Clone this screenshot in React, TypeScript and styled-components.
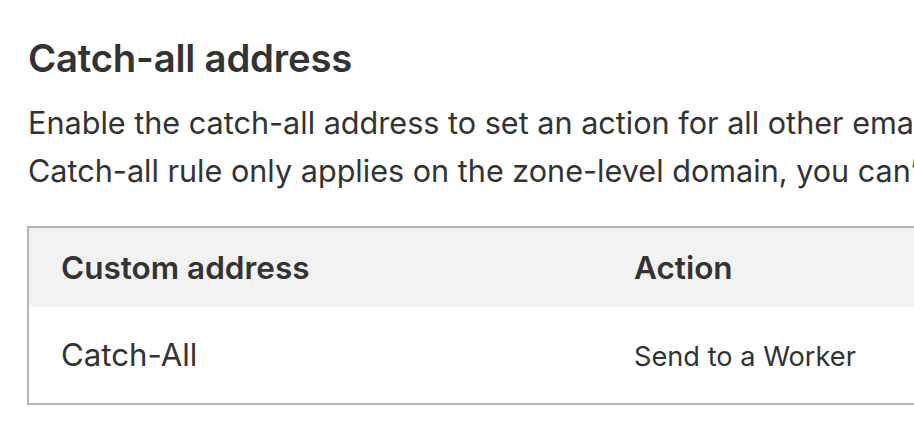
import React from "react";
import styled, { createGlobalStyle } from "styled-components";

const Global = createGlobalStyle`
  html, body { margin: 0; padding: 0; background: #ffffff; overflow: hidden; }
  body { font-family: Inter, "Noto Sans", sans-serif; color: #333333; }
`;

const Page = styled.div`
  width: 1300px;
  padding: 35px 0 0 28px;
`;

const Title = styled.h2`
  margin: 0;
  font-size: 38.3px;
  line-height: 46px;
  font-weight: 600;
  letter-spacing: -0.2px;
`;

const Description = styled.p`
  margin: 18px 0 0;
  font-size: 30.6px;
  line-height: 48px;
  font-weight: 400;
  white-space: nowrap;
`;

const Table = styled.div`
  margin-top: 31px;
  margin-left: -1px;
  width: 1200px;
  border: 2px solid #b5b5b5;
`;

const Row = styled.div<{ $head?: boolean }>`
  display: grid;
  grid-template-columns: 573px 1fr;
  align-items: center;
  height: ${(p) => (p.$head ? "79px" : "96px")};
  background: ${(p) => (p.$head ? "#f2f2f2" : "#ffffff")};
`;

const HeadCell = styled.div`
  padding-left: 32px;
  font-size: 31.5px;
  font-weight: 600;
`;

const Cell = styled.div<{ $size: number }>`
  padding-left: 32px;
  padding-top: ${(p) => (p.$size < 30 ? 3 : 0)}px;
  font-size: ${(p) => p.$size}px;
  font-weight: 400;
`;

export default function App() {
  return (
    <>
      <Global />
      <Page>
        <Title>Catch-all address</Title>
        <Description>
          Enable the catch-all address to set an action for all other emails sent to your domain.
          <br />
          Catch-all rule only applies on the zone-level domain, you can’t create a catch-all rule for subdomains.
        </Description>
        <Table>
          <Row $head>
            <HeadCell>Custom address</HeadCell>
            <HeadCell>Action</HeadCell>
          </Row>
          <Row>
            <Cell $size={31.2}>Catch-All</Cell>
            <Cell $size={27.2}>Send to a Worker</Cell>
          </Row>
        </Table>
      </Page>
    </>
  );
}
